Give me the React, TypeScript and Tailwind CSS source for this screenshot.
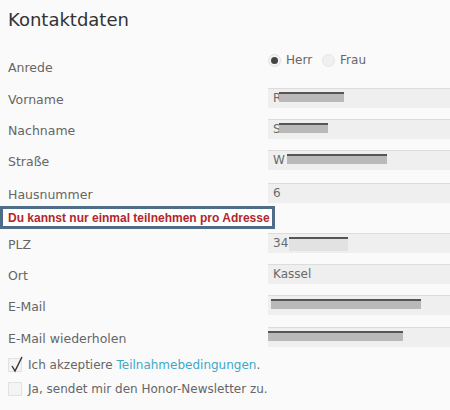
import React from 'react';

function Redact({ left, width, light }: { left: number; width: number; light?: boolean }) {
  return (
    <div className="absolute top-[3px]" style={{ left, width }}>
      <div className="h-[2px] bg-[#555555]" />
      <div className={light ? 'h-[12px] bg-[#e2e2e2]' : 'h-[8px] bg-[#b9b9b9]'} />
    </div>
  );
}

function Field({
  label,
  value,
  mt,
  children,
}: {
  label: string;
  value?: string;
  mt: string;
  children?: React.ReactNode;
}) {
  return (
    <div className={`flex h-[20px] items-center ${mt}`}>
      <div className="w-[268px] shrink-0 pl-2 pt-[3px] text-[12.5px] leading-[16px] text-[#666666]">{label}</div>
      <div className="relative h-[20px] w-[240px] shrink-0 border-t border-[#dcdcdc] bg-[#efefef] pl-[5px] text-[12px] leading-[19px] text-[#6a6a6a]">
        {value}
        {children}
      </div>
    </div>
  );
}

export default function App() {
  return (
    <div
      className="h-[410px] w-[450px] overflow-hidden bg-[#fafafa]"
      style={{ fontFamily: '"DejaVu Sans", sans-serif' }}
    >
      <h1 className="pl-2 pt-[7px] text-[18px] leading-[26px] text-[#333333]">Kontaktdaten</h1>

      <div className="mt-[19px] flex h-[26px] items-start">
        <div className="w-[268px] shrink-0 pl-2 pt-[8px] text-[12.5px] leading-[16px] text-[#666666]">Anrede</div>
        <div className="flex items-center gap-[5px] text-[12px] leading-[16px] text-[#666666]">
          <span className="flex h-[13px] w-[13px] items-center justify-center rounded-full border border-[#e0e0e0] bg-[#f3f3f3]">
            <span className="h-[7px] w-[7px] rounded-full bg-[#444444]" />
          </span>
          <span>Herr</span>
          <span className="ml-[5px] h-[13px] w-[13px] rounded-full border border-[#e6e6e6] bg-[#f0f0f0]" />
          <span>Frau</span>
        </div>
      </div>

      <Field label="Vorname" value="R" mt="mt-[10px]">
        <Redact left={11} width={65} />
      </Field>
      <Field label="Nachname" value="S" mt="mt-[11px]">
        <Redact left={11} width={49} />
      </Field>
      <Field label="Straße" value="W" mt="mt-[11px]">
        <Redact left={19} width={100} />
      </Field>
      <Field label="Hausnummer" value="6" mt="mt-[13px]" />

      <div
        className="mt-[3px] flex h-[23px] w-[275px] items-center whitespace-nowrap border-[3px] border-[#4f6d88] bg-white pl-[5px] text-[12px] font-bold text-[#b3262c]"
        style={{ fontFamily: '"Liberation Sans", Arial, sans-serif' }}
      >
        Du kannst nur einmal teilnehmen pro Adresse
      </div>

      <Field label="PLZ" value="34" mt="mt-[4px]">
        <Redact left={21} width={59} light />
      </Field>
      <Field label="Ort" value="Kassel" mt="mt-[11px]" />
      <Field label="E-Mail" mt="mt-[11px]">
        <Redact left={3} width={150} />
      </Field>
      <Field label="E-Mail wiederholen" mt="mt-[12px]">
        <Redact left={0} width={135} />
      </Field>

      <div className="mt-[10px] flex items-center gap-[6px] pl-2 text-[12px] leading-[16px] text-[#666666]">
        <span className="relative h-[14px] w-[14px] border border-[#e2e2e2] bg-[#f4f4f4]">
          <svg className="absolute -top-[3px] left-[1px]" width="14" height="17" viewBox="0 0 14 17">
            <path d="M2 10 L5 15 L12 1" fill="none" stroke="#333" strokeWidth="1.4" />
          </svg>
        </span>
        <span>
          Ich akzeptiere <span className="text-[#3ca9c9]">Teilnahmebedingungen</span>.
        </span>
      </div>
      <div className="mt-[8px] flex items-center gap-[6px] pl-2 text-[12px] leading-[16px] text-[#666666]">
        <span className="h-[14px] w-[14px] border border-[#e2e2e2] bg-[#f4f4f4]" />
        <span>Ja, sendet mir den Honor-Newsletter zu.</span>
      </div>
    </div>
  );
}
